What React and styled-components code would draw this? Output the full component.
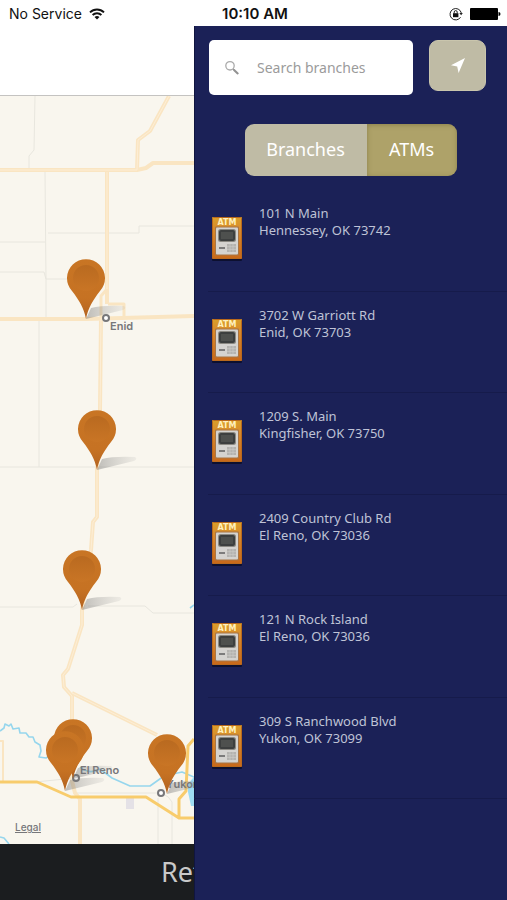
import React from "react";
import styled, { createGlobalStyle } from "styled-components";

const Global = createGlobalStyle`
  * { box-sizing: border-box; }
  body { margin: 0; background: #fff; font-family: "Noto Sans", "Open Sans", sans-serif; }
  button, input { font-family: inherit; }
`;

const Screen = styled.div`
  display: flex;
  flex-direction: column;
  min-height: 100vh;
`;

const StatusBar = styled.header`
  display: grid;
  grid-template-columns: 1fr auto 1fr;
  align-items: center;
  height: 26px;
  padding: 2px 6px 0 9px;
  background: #fff;
  color: #111;
  font: 14px/20px Inter, "Liberation Sans", sans-serif;
`;

const StatusGroup = styled.div`
  display: flex;
  align-items: center;
  justify-content: ${(p) => (p.$end ? "flex-end" : "flex-start")};
  gap: 7px;
`;

const Clock = styled.time`
  font-size: 15px;
  font-weight: 600;
`;

const Body = styled.div`
  display: flex;
  flex: 1;
`;

const Page = styled.main`
  display: flex;
  flex-direction: column;
  flex: 0 0 194px;
  overflow: hidden;
`;

const PageHeader = styled.div`
  height: 70px;
  border-bottom: 1px solid #c4c3c1;
`;

const MapCanvas = styled.section`
  position: relative;
  flex: 1;
  min-height: 748px;
  overflow: hidden;
  background: #f9f6ee;
`;

const Terrain = styled.svg`
  display: block;
`;

const Town = styled.span`
  position: absolute;
  left: ${(p) => p.$x}px;
  top: ${(p) => p.$y}px;
  color: #77777a;
  font: 600 11px/14px Inter, "Liberation Sans", sans-serif;
  white-space: nowrap;
`;

const LegalLink = styled.a`
  position: absolute;
  left: 15px;
  bottom: 10px;
  color: #77777a;
  font: 500 10px/14px Inter, "Liberation Sans", sans-serif;
`;

const PinButton = styled.button`
  position: absolute;
  left: ${(p) => p.$x - 19}px;
  top: ${(p) => p.$y - 60}px;
  width: 60px;
  height: 60px;
  padding: 0;
  border: 0;
  background: none;
`;

const PageFooter = styled.footer`
  display: flex;
  align-items: center;
  height: 56px;
  padding-left: 161px;
  background: #1b1d1f;
  color: #c9c9c9;
  font-size: 27px;
  line-height: 36px;
  white-space: nowrap;
`;

const Drawer = styled.aside`
  flex: 1;
  min-width: 0;
  background: #1b2157;
  box-shadow: inset 1px 0 #10153f;
`;

const SearchRow = styled.form`
  display: flex;
  align-items: flex-start;
  gap: 16px;
  padding: 14px 21px 0 15px;
`;

const SearchBox = styled.label`
  display: flex;
  align-items: center;
  flex: 1;
  min-width: 0;
  height: 55px;
  padding-left: 15px;
  gap: 17px;
  border-radius: 5px;
  background: #fff;
`;

const SearchInput = styled.input`
  flex: 1;
  min-width: 0;
  padding: 0;
  border: 0;
  outline: 0;
  background: none;
  font-size: 14px;
  line-height: 20px;
  color: #333;
  &::placeholder { color: #9b9b9b; opacity: 1; }
`;

const LocateButton = styled.button`
  display: grid;
  place-items: center;
  width: 57px;
  height: 51px;
  padding: 0;
  border: 1px solid #c9c5ad;
  border-radius: 9px;
  background: #bfbba5;
`;

const Segments = styled.div`
  display: flex;
  width: 212px;
  height: 52px;
  margin: 29px auto 14px;
  border-radius: 9px;
  overflow: hidden;
`;

const Segment = styled.button`
  flex: ${(p) => (p.$active ? "0 0 90px" : "1")};
  padding: 0 0 2px;
  border: 0;
  background: ${(p) => (p.$active ? "#aea269" : "#bfbba5")};
  box-shadow: ${(p) => (p.$active ? "inset 0 1px 5px #8b804b" : "none")};
  color: #fff;
  font-size: 18px;
  line-height: 24px;
`;

const List = styled.ul`
  display: grid;
  grid-auto-rows: 1fr;
  min-height: 609px;
  margin: 0;
  padding: 0;
  list-style: none;
`;

const Item = styled.li`
  display: flex;
  gap: 16px;
  margin-left: 14px;
  padding: 15px 8px 0 3px;
  border-bottom: 1px solid #161b4b;
  &:last-child { margin-left: 0; padding-left: 17px; }
`;

const Address = styled.address`
  color: #bfc3d6;
  font-size: 13px;
  font-style: normal;
  line-height: 17px;
`;

const AtmDrawing = styled.svg`
  flex: none;
  margin-top: 11px;
`;

const AtmName = styled.text`
  font: 700 8px "DejaVu Sans", sans-serif;
`;

const ITEMS = [
  ["101 N Main", "Hennessey, OK 73742"],
  ["3702 W Garriott Rd", "Enid, OK 73703"],
  ["1209 S. Main", "Kingfisher, OK 73750"],
  ["2409 Country Club Rd", "El Reno, OK 73036"],
  ["121 N Rock Island", "El Reno, OK 73036"],
  ["309 S Ranchwood Blvd", "Yukon, OK 73099"],
];

const PINS = [
  { x: 86, y: 223, name: "Enid" },
  { x: 97, y: 374, name: "Hennessey" },
  { x: 82, y: 514, name: "Kingfisher" },
  { x: 73, y: 683, name: "El Reno, Country Club Rd" },
  { x: 65, y: 695, name: "El Reno, Rock Island" },
  { x: 167, y: 698, name: "Yukon" },
];

function Wifi() {
  return (
    <svg width="16" height="12" viewBox="0 0 16 12" fill="none" stroke="#111" strokeWidth="1.9">
      <path d="M1 4.4a10 10 0 0 1 14 0M3.6 7a6.3 6.3 0 0 1 8.8 0" />
      <path d="M8 11.6 5.5 9.1a3.6 3.6 0 0 1 5 0z" fill="#111" stroke="none" />
    </svg>
  );
}

function RotationLock() {
  return (
    <svg width="14" height="14" viewBox="0 0 14 14" fill="none" stroke="#222" strokeWidth="1">
      <path d="M11.6 10.2A5.7 5.7 0 1 1 12.3 6" />
      <path d="M10.4 6h3.4l-1.7 2.2z" fill="#222" stroke="none" />
      <rect x="4" y="6.2" width="5.4" height="4" fill="#111" stroke="none" />
      <path d="M5.2 6.4V5.1a1.5 1.5 0 0 1 3 0v1.3" />
    </svg>
  );
}

function Battery() {
  return (
    <svg width="31" height="12" viewBox="0 0 31 12">
      <rect x="0" y="0" width="28" height="12" rx="1" fill="#000" />
      <path d="M28.5 4q2 0 2 2t-2 2z" fill="#000" />
    </svg>
  );
}

function Magnifier() {
  return (
    <svg width="16" height="16" viewBox="0 0 16 16" fill="none">
      <circle cx="6" cy="5.8" r="4.2" stroke="#aaa" strokeWidth="1.3" />
      <path d="m9 9 1.5 1.5" stroke="#999" strokeWidth="1.3" />
      <path d="m10.3 10.2 3.4 3.2" stroke="#929292" strokeWidth="2.1" strokeLinecap="round" />
    </svg>
  );
}

function Arrow() {
  return (
    <svg width="16" height="17" viewBox="0 0 16 17">
      <path d="M15 1 1 8.2l6.2 1.2L8.6 16z" fill="#fff" />
    </svg>
  );
}

function Atm() {
  return (
    <AtmDrawing width="32" height="46" viewBox="0 0 32 46">
      <defs>
        <linearGradient id="case" x2="0" y2="1">
          <stop stopColor="#d9a02a" />
          <stop offset=".3" stopColor="#d98a2c" />
          <stop offset="1" stopColor="#c8681a" />
        </linearGradient>
      </defs>
      <rect x="1" y="3" width="30" height="42" rx="1" fill="#0d1030" />
      <rect x="1" y="1" width="30" height="42" rx="1" fill="url(#case)" />
      <rect x="1.5" y="1.5" width="29" height="41" rx="1" fill="none" stroke="#b9691c" />
      <AtmName x="16" y="9" textAnchor="middle" fill="#fff0bd">ATM</AtmName>
      <rect x="4" y="10.5" width="24" height="29" rx="1" fill="#a87545" />
      <rect x="5" y="11.5" width="22" height="27" rx="1" fill="#d5d3d0" />
      <rect x="7" y="13" width="18" height="13" rx="2.5" fill="#8b8983" />
      <rect x="8" y="14" width="16" height="11" rx="2" fill="#3d3f3f" />
      <rect x="10" y="16" width="12" height="7" fill="#4e504e" />
      <path d="M8 32h6" stroke="#666" strokeWidth="1.6" />
      <rect x="16" y="28" width="9" height="8" fill="#b4b2af" />
      <path d="M19 28v8M22 28v8M16 30.7h9M16 33.4h9" stroke="#cfcdca" strokeWidth=".6" />
    </AtmDrawing>
  );
}

function Pin({ x, y, name }) {
  return (
    <PinButton type="button" $x={x} $y={y} aria-label={name}>
      <svg width="60" height="60" viewBox="0 0 60 60">
        <defs>
          <linearGradient id="shade" x1="0" x2="1">
            <stop stopColor="#666" stopOpacity=".4" />
            <stop offset="1" stopColor="#999" stopOpacity=".12" />
          </linearGradient>
          <linearGradient id="body" x2="0" y2="1">
            <stop stopColor="#c87524" />
            <stop offset=".65" stopColor="#c67223" />
            <stop offset="1" stopColor="#b2621f" />
          </linearGradient>
          <linearGradient id="dish" x2="0" y2="1">
            <stop stopColor="#b96a20" />
            <stop offset="1" stopColor="#c97525" />
          </linearGradient>
        </defs>
        <path d="M19 60 24 49q12-3 33-2 3 2-1 4z" fill="url(#shade)" />
        <path d="M19 60C17 49 12 41 5 32A19 19 0 1 1 33 32C26 41 21 49 19 60z" fill="url(#body)" />
        <circle cx="19" cy="19" r="13" fill="url(#dish)" />
      </svg>
    </PinButton>
  );
}

function MapTerrain() {
  return (
    <Terrain width="194" height="748" viewBox="0 0 194 748" fill="none" strokeLinejoin="round">
      <g stroke="#e8e6de">
        <path d="M35 0 34 54 29 60V74M45 76l1 107v40M0 146h45M0 176h44l2 7h24M48 137h91v-7h55M39 225v146M0 371h194M0 511h73l4-3M88 510h57l8 7h41" />
        <path d="M35 686l40-4M75 697h85M158 748v-46M172 748v-42q-3-6-9-8" />
      </g>
      <rect x="126" y="702" width="8" height="11" fill="#e4e1e6" />
      <g stroke="#96d6ed" strokeWidth="1.6">
        <path d="m0 635 4-3 1-4 4 2 2-2 2 5 6-1 1 5 6 0 3 4 4 0 2 5 5 3 1 6-2 6 7 1 5-3" />
        <path d="M80 671q9 8 20 2l12 9 18 8 20 0 14-10 18-4 12 5" />
        <path d="m0 741 4 1 5 6M190 512l4-3" />
      </g>
      <path d="M194 681q-7 6-6 15l3 14h3z" fill="#9edcf3" />
      <g stroke="#fae5c2" strokeWidth="4">
        <path d="M0 74h137l1-30 12-9 19-35M137 74l9-2 7-5h41M107 76v132M0 223l86 0 108-3M101 222l-1 92-3 60v47l-4 5-2 28-9 60v15l-14 44-5 6 1 12 8 9v85l3 12 5 6v46M72 597l85 42" />
        <path d="M107 193l-6 7v22M108 208h16v13" strokeWidth="3" />
        <path d="M-1 645h4v40" strokeWidth="2" />
      </g>
      <g stroke="#fdeed6" strokeWidth="1">
        <path d="M0 74h137l1-30 12-9 19-35M107 76v117M101 222l-1 92-3 60v47l-4 5-2 28-9 60v15l-14 44-5 6 1 12 8 9v85M72 597l85 42" />
      </g>
      <path d="M0 686h37l34 15h75l33 21h15M179 722v-19l7-8 2-45 6-7" stroke="#f8cc6c" strokeWidth="3" />
      <g fill="#fff" stroke="#77777a" strokeWidth="2">
        <circle cx="106" cy="222" r="3" />
        <circle cx="76" cy="682" r="3" />
        <circle cx="161" cy="697" r="3" />
      </g>
    </Terrain>
  );
}

export default function App() {
  return (
    <Screen>
      <Global />
      <StatusBar>
        <StatusGroup>
          <span>No Service</span>
          <Wifi />
        </StatusGroup>
        <Clock>10:10 AM</Clock>
        <StatusGroup $end>
          <RotationLock />
          <Battery />
        </StatusGroup>
      </StatusBar>
      <Body>
        <Page>
          <PageHeader />
          <MapCanvas>
            <MapTerrain />
            <Town $x={110} $y={223}>Enid</Town>
            <Town $x={80} $y={667}>El Reno</Town>
            <Town $x={166} $y={681}>Yukon</Town>
            {PINS.map((pin) => (
              <Pin key={pin.name} {...pin} />
            ))}
            <LegalLink href="#legal">Legal</LegalLink>
          </MapCanvas>
          <PageFooter>Refresh</PageFooter>
        </Page>
        <Drawer>
          <SearchRow onSubmit={(e) => e.preventDefault()}>
            <SearchBox>
              <Magnifier />
              <SearchInput type="text" aria-label="Search branches" placeholder="Search branches" />
            </SearchBox>
            <LocateButton type="button" aria-label="Use my location">
              <Arrow />
            </LocateButton>
          </SearchRow>
          <Segments>
            <Segment type="button" aria-pressed="false">Branches</Segment>
            <Segment type="button" $active aria-pressed="true">ATMs</Segment>
          </Segments>
          <List>
            {ITEMS.map(([street, city]) => (
              <Item key={street}>
                <Atm />
                <Address>
                  {street}
                  <br />
                  {city}
                </Address>
              </Item>
            ))}
          </List>
        </Drawer>
      </Body>
    </Screen>
  );
}
